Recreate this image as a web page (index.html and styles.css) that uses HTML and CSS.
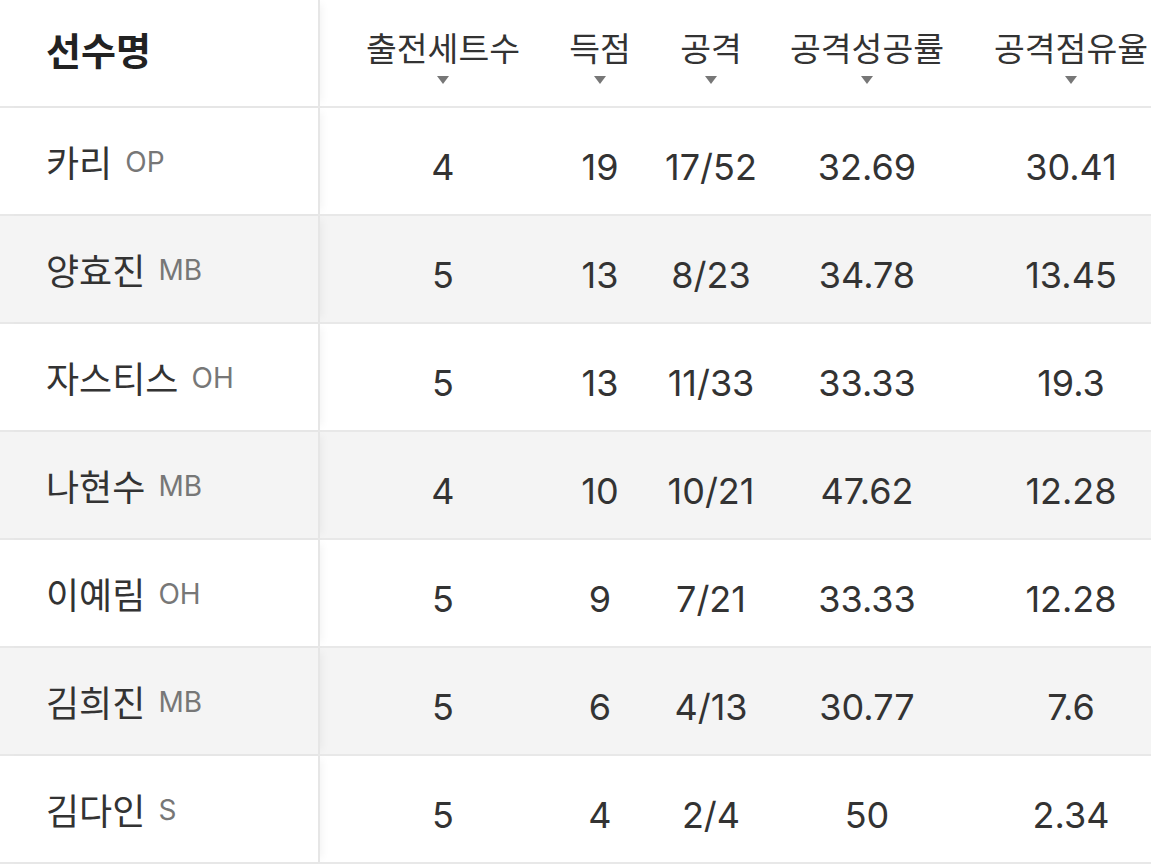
FILE: index.html
```html
<!DOCTYPE html>
<html lang="ko">
<head>
<meta charset="utf-8">
<link rel="stylesheet" href="styles.css">
</head>
<body>
<div class="table">
  <div class="row head">
    <div class="cell name"><span class="title">선수명</span></div>
    <div class="cell"><span class="label">출전세트수</span><span class="tri"></span></div>
    <div class="cell"><span class="label">득점</span><span class="tri"></span></div>
    <div class="cell"><span class="label">공격</span><span class="tri"></span></div>
    <div class="cell"><span class="label">공격성공률</span><span class="tri"></span></div>
    <div class="cell"><span class="label">공격점유율</span><span class="tri"></span></div>
  </div>
  <div class="row">
    <div class="cell name">카리<span class="pos">OP</span></div>
    <div class="cell num">4</div><div class="cell num">19</div><div class="cell num">17/52</div><div class="cell num">32.69</div><div class="cell num">30.41</div>
  </div>
  <div class="row alt">
    <div class="cell name">양효진<span class="pos">MB</span></div>
    <div class="cell num">5</div><div class="cell num">13</div><div class="cell num">8/23</div><div class="cell num">34.78</div><div class="cell num">13.45</div>
  </div>
  <div class="row">
    <div class="cell name">자스티스<span class="pos">OH</span></div>
    <div class="cell num">5</div><div class="cell num">13</div><div class="cell num">11/33</div><div class="cell num">33.33</div><div class="cell num">19.3</div>
  </div>
  <div class="row alt">
    <div class="cell name">나현수<span class="pos">MB</span></div>
    <div class="cell num">4</div><div class="cell num">10</div><div class="cell num">10/21</div><div class="cell num">47.62</div><div class="cell num">12.28</div>
  </div>
  <div class="row">
    <div class="cell name">이예림<span class="pos">OH</span></div>
    <div class="cell num">5</div><div class="cell num">9</div><div class="cell num">7/21</div><div class="cell num">33.33</div><div class="cell num">12.28</div>
  </div>
  <div class="row alt">
    <div class="cell name">김희진<span class="pos">MB</span></div>
    <div class="cell num">5</div><div class="cell num">6</div><div class="cell num">4/13</div><div class="cell num">30.77</div><div class="cell num">7.6</div>
  </div>
  <div class="row">
    <div class="cell name">김다인<span class="pos">S</span></div>
    <div class="cell num">5</div><div class="cell num">4</div><div class="cell num">2/4</div><div class="cell num">50</div><div class="cell num">2.34</div>
  </div>
</div>
</body>
</html>
```
FILE: styles.css
```css
html, body {
  margin: 0;
  padding: 0;
  background: #fff;
  overflow: hidden;
}
body {
  font-family: Inter, "Noto Sans CJK KR", sans-serif;
  color: #333;
}
.table {
  width: 1196px;
}
.row {
  display: grid;
  grid-template-columns: 320px 246px 68px 154px 158px 250px;
  height: 108px;
  box-sizing: border-box;
  border-bottom: 2px solid #e8e8e8;
  background: #fff;
}
.row.alt {
  background: #f4f4f4;
}
.cell {
  display: flex;
  align-items: center;
  justify-content: center;
  white-space: nowrap;
}
.cell.name {
  justify-content: flex-start;
  padding-left: 46px;
  font-size: 36px;
  box-sizing: border-box;
  border-right: 2px solid #e6e6e6;
  box-shadow: 6px 0 8px -4px rgba(0,0,0,0.05);
  position: relative;
  z-index: 1;
  background: inherit;
}
.pos {
  font-size: 28px;
  color: #777;
  margin-left: 13px;
  padding-top: 2px;
}
.head .cell {
  flex-direction: column;
}
.head .cell.name {
  flex-direction: row;
}
.title {
  font-weight: 700;
  font-size: 38px;
  color: #222;
  margin-top: -10px;
}
.label {
  font-size: 33.5px;
  line-height: 38px;
  margin-top: 8px;
}
.tri {
  width: 0;
  height: 0;
  border-left: 6px solid transparent;
  border-right: 6px solid transparent;
  border-top: 8px solid #777;
  margin-top: 8px;
}
.num {
  font-size: 36px;
  padding-top: 12px;
}
```
